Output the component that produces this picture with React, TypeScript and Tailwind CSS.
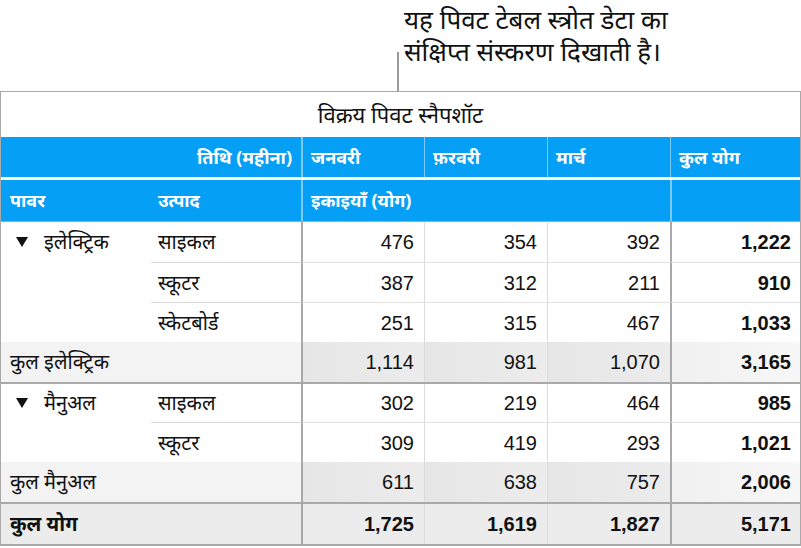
const font = { fontFamily: '"Noto Sans", "Liberation Sans", sans-serif' };

type Row = {
  power?: string;
  product?: string;
  values: string[];
  total: string;
  kind: "item" | "subtotal" | "grand";
  firstInGroup?: boolean;
};

const rows: Row[] = [
  { power: "इलेक्ट्रिक", product: "साइकल", values: ["476", "354", "392"], total: "1,222", kind: "item", firstInGroup: true },
  { product: "स्कूटर", values: ["387", "312", "211"], total: "910", kind: "item" },
  { product: "स्केटबोर्ड", values: ["251", "315", "467"], total: "1,033", kind: "item" },
  { power: "कुल इलेक्ट्रिक", values: ["1,114", "981", "1,070"], total: "3,165", kind: "subtotal" },
  { power: "मैनुअल", product: "साइकल", values: ["302", "219", "464"], total: "985", kind: "item", firstInGroup: true },
  { product: "स्कूटर", values: ["309", "419", "293"], total: "1,021", kind: "item" },
  { power: "कुल मैनुअल", values: ["611", "638", "757"], total: "2,006", kind: "subtotal" },
  { power: "कुल योग", values: ["1,725", "1,619", "1,827"], total: "5,171", kind: "grand" },
];

const cols = "grid grid-cols-[150px_150px_123px_123px_123px_1fr]";
const num = { fontFamily: '"Liberation Sans", Arial, sans-serif' };

function BodyRow({ row, prev }: { row: Row; prev?: Row }) {
  const thickTop = (prev && prev.kind === "subtotal") || row.kind === "grand";
  const lightLine = prev && prev.kind === "item" && row.kind === "item";
  const rowBg =
    row.kind === "grand" ? "bg-[#ececec]" : row.kind === "subtotal" ? "bg-[#f3f3f3]" : "bg-white";
  const numBg = row.kind === "subtotal" ? "bg-gradient-to-r from-[#e6e6e6] to-[#ececec]" : "";
  const totBg = row.kind === "subtotal" ? "bg-gradient-to-r from-[#f0f0f0] to-[#f7f7f7]" : "";
  const bold = row.kind === "grand" ? "font-bold" : "";

  return (
    <div
      className={`${cols} ${row.kind === "grand" ? "h-[42px]" : "h-[40px]"} ${rowBg} ${
        thickTop ? "border-t-2 border-[#a9a9a9]" : ""
      }`}
    >
      <div
        className={`flex items-center pl-[9px] text-[20px] text-[#111] ${bold} ${
          row.kind !== "item" ? "col-span-2" : ""
        }`}
        style={font}
      >
        {row.kind === "item" && row.firstInGroup ? (
          <>
            <svg width="12" height="10" viewBox="0 0 12 10" className="ml-[6px] mr-[16px]">
              <path d="M0 0 H12 L6 10 Z" fill="#111" />
            </svg>
            <span>{row.power}</span>
          </>
        ) : row.kind !== "item" ? (
          <span>{row.power}</span>
        ) : null}
      </div>
      {row.kind === "item" && (
        <div
          className={`flex items-center pl-[7px] text-[20px] text-[#111] ${
            lightLine ? "border-t border-[#d9d9d9]" : ""
          }`}
          style={font}
        >
          {row.product}
        </div>
      )}
      {row.values.map((v, i) => (
        <div
          key={i}
          className={`flex items-center justify-end pr-[10px] text-[20px] text-[#111] ${
            i === 0 ? "border-l-2 border-[#a9a9a9]" : "border-l border-[#dcdcdc]"
          } ${lightLine ? "border-t border-t-[#e2e2e2]" : ""} ${numBg} ${bold}`}
          style={num}
        >
          {v}
        </div>
      ))}
      <div
        className={`flex items-center justify-end pr-[9px] text-[20px] font-bold text-[#111] border-l-2 border-[#a9a9a9] ${
          lightLine ? "border-t border-t-[#e2e2e2]" : ""
        } ${totBg}`}
        style={num}
      >
        {row.total}
      </div>
    </div>
  );
}

export default function App() {
  return (
    <div className="w-[801px] h-[548px] bg-white relative overflow-hidden" style={font}>
      {/* Callout */}
      <div className="h-[91px] pl-[404px] pt-[4px] text-[26px] text-[#111] whitespace-nowrap">
        <div className="h-[32px] leading-[30px]">यह पिवट टेबल स्त्रोत डेटा का</div>
        <div className="h-[32px] leading-[30px]">संक्षिप्त संस्करण दिखाती है।</div>
      </div>
      <div className="absolute left-[397px] top-[52px] w-[2px] h-[39px] bg-[#9a9a9a]" />

      {/* Table */}
      <div className="border-t border-l border-r border-b-2 border-[#a9a9a9] w-[801px]">
        <div className="h-[45px] flex items-center justify-center text-[22px] text-[#111]">
          विक्रय पिवट स्नैपशॉट
        </div>

        {/* Header row 1 */}
        <div className={`${cols} h-[40px] bg-[#05a0f5] text-white font-bold text-[18px]`}>
          <div className="col-span-2 flex items-center justify-end pr-[9px]">तिथि (महीना)</div>
          {["जनवरी", "फ़रवरी", "मार्च", "कुल योग"].map((m, i) => (
            <div
              key={m}
              className={`flex items-center pl-[8px] ${i === 0 ? "border-l-2" : "border-l"} border-[#7ccaf7]`}
            >
              {m}
            </div>
          ))}
        </div>
        <div className="h-[3px] bg-white" />
        {/* Header row 2 */}
        <div className={`${cols} h-[41px] bg-[#05a0f5] text-white font-bold text-[18px]`}>
          <div className="flex items-center pl-[9px]">पावर</div>
          <div className="flex items-center pl-[7px]">उत्पाद</div>
          <div className="col-span-3 flex items-center pl-[8px] border-l-2 border-[#7ccaf7]">
            इकाइयाँ (योग)
          </div>
          <div className="border-l-2 border-[#7ccaf7]" />
        </div>
        <div className="h-px bg-[#a9a9a9]" />

        {rows.map((r, i) => (
          <BodyRow key={i} row={r} prev={rows[i - 1]} />
        ))}
      </div>
    </div>
  );
}
